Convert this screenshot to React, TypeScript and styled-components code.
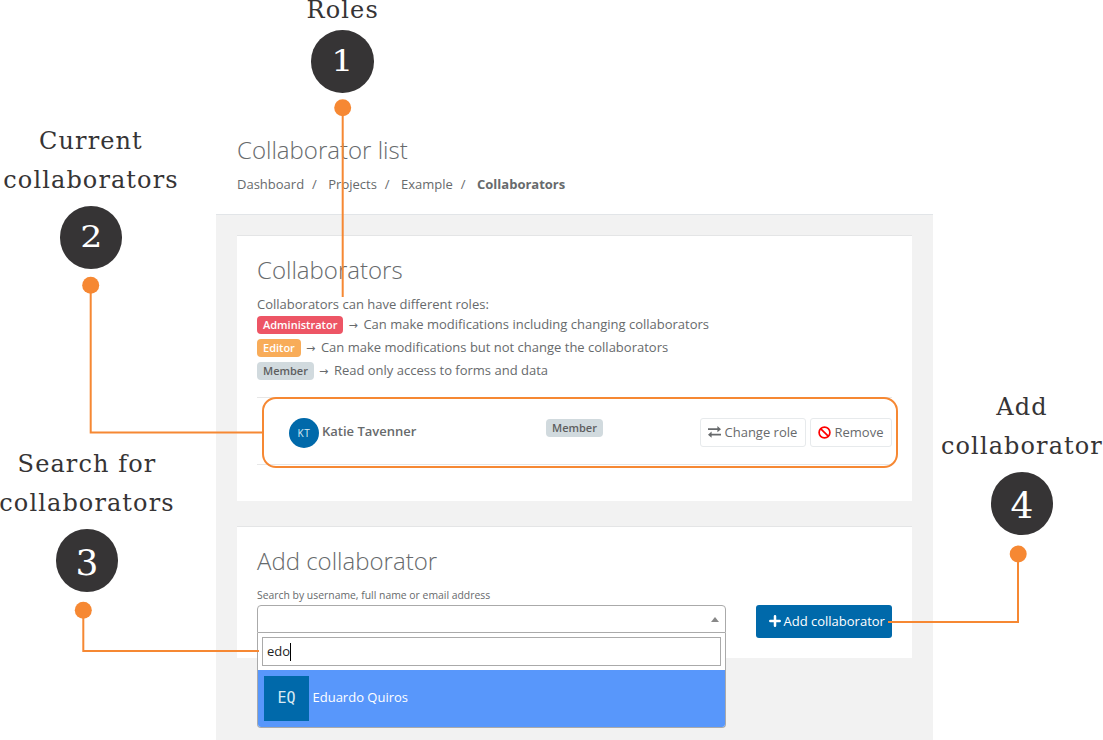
import React from "react";
import styled, { createGlobalStyle } from "styled-components";

const GlobalStyle = createGlobalStyle`
  *, *::before, *::after { box-sizing: border-box; }
  html, body { margin: 0; padding: 0; background: #fff; overflow: hidden; }
  body { font-family: "Open Sans", sans-serif; font-size: 13px; line-height: 18.57px; color: #676a6c; }
`;

const Figure = styled.div`
  position: relative;
  width: 1103px;
  height: 740px;
  overflow: hidden;
`;

const Page = styled.main`
  display: flex;
  flex-direction: column;
  width: 717px;
  height: 740px;
  margin-left: 216px;
  background: #f2f2f2;
`;

const PageHeader = styled.header`
  height: 215px;
  padding: 137px 21px 0;
  background: #fff;
  border-bottom: 1px solid #e2e5e8;
`;

const Title = styled.h2`
  margin: 0;
  font-size: 24px;
  font-weight: 300;
  line-height: 26px;
`;

const Breadcrumb = styled.ol`
  display: flex;
  margin: 12px 0 0;
  padding: 0;
  list-style: none;
`;

const Crumb = styled.li<{ $current?: boolean }>`
  font-weight: ${(p) => (p.$current ? 700 : 400)};
  &:not(:first-child)::before {
    content: "/";
    padding: 0 11.4px 0 8px;
    font-weight: 400;
  }
`;

const Content = styled.div`
  display: flex;
  flex-direction: column;
  gap: 25px;
  padding: 20px 21px 0;
`;

const Card = styled.section<{ $height: number }>`
  height: ${(p) => p.$height}px;
  padding: 21px 20px 0;
  background: #fff;
  border-top: 1px solid #e4e5e6;
`;

const RoleIntro = styled.p`
  margin: 12px 0 2px;
`;

const RoleLine = styled.div`
  display: flex;
  align-items: center;
  gap: 5px;
  height: 18px;
  margin-bottom: 5px;
`;

const Arrow = styled.span`
  font-family: "DejaVu Sans", sans-serif;
  font-size: 11px;
  width: 10px;
  display: flex;
  padding-top: 3px;
`;

const badgeColors = {
  danger: ["#ed5565", "#fff"],
  warning: ["#f8ac59", "#fff"],
  plain: ["#d1dade", "#5e5e5e"],
};

const Badge = styled.span<{ $tone: keyof typeof badgeColors }>`
  display: inline-block;
  height: 18px;
  padding: 0 6px;
  border-radius: 4px;
  font-size: 11px;
  font-weight: 600;
  line-height: 18px;
  background: ${(p) => badgeColors[p.$tone][0]};
  color: ${(p) => badgeColors[p.$tone][1]};
`;

const MemberRow = styled.div`
  display: grid;
  grid-template-columns: 257px 1fr auto;
  height: 68px;
  margin-top: 17px;
  padding: 20px 0 0 32px;
  border-top: 1px solid #e7e7e7;
  border-bottom: 1px solid #e7e7e7;
`;

const Person = styled.div`
  display: flex;
  gap: 3px;
  font-weight: 600;
  line-height: 27px;
`;

const Avatar = styled.span<{ $size: number; $round?: boolean }>`
  flex: none;
  display: flex;
  align-items: center;
  justify-content: center;
  width: ${(p) => p.$size}px;
  height: ${(p) => p.$size}px;
  border-radius: ${(p) => (p.$round ? "50%" : "0")};
  background: #0069aa;
  color: #d9e9f3;
  font-family: ${(p) => (p.$round ? '"Open Sans"' : '"DejaVu Sans Mono"')}, sans-serif;
  font-size: ${(p) => (p.$round ? 10 : 15)}px;
  font-weight: 400;
  line-height: 1;
  letter-spacing: ${(p) => (p.$round ? 0.6 : 0)}px;
  padding-top: ${(p) => (p.$round ? 1 : 0)}px;
`;

const Actions = styled.div`
  display: flex;
  gap: 4px;
`;

const GhostButton = styled.button<{ $width: number }>`
  display: flex;
  align-items: center;
  gap: 3.5px;
  width: ${(p) => p.$width}px;
  height: 29px;
  padding: 0 0 0 7px;
  border: 1px solid #e7eaec;
  border-radius: 3px;
  background: #fff;
  color: #676a6c;
  font: 13px "Open Sans", sans-serif;
  white-space: nowrap;
`;

const AddRow = styled.div`
  display: flex;
  justify-content: space-between;
`;

const FieldLabel = styled.label`
  display: block;
  margin-top: 12px;
  height: 19px;
  font-size: 10.4px;
  line-height: 19px;
`;

const Select = styled.div`
  position: relative;
  width: 469px;
  height: 28px;
`;

const SelectBox = styled.div`
  display: flex;
  align-items: center;
  justify-content: flex-end;
  height: 28px;
  padding-right: 6px;
  border: 1px solid #aaa;
  border-radius: 4px 4px 0 0;
  background: #fff;
`;

const Caret = styled.i`
  border: 4px solid transparent;
  border-top: 0;
  border-bottom: 5px solid #888;
`;

const Dropdown = styled.div`
  position: absolute;
  top: 28px;
  left: 0;
  width: 469px;
  height: 95px;
  padding-top: 4px;
  border: 1px solid #aaa;
  border-top: 0;
  border-radius: 0 0 4px 4px;
  background: #fff;
  overflow: hidden;
`;

const SearchInput = styled.div`
  display: flex;
  align-items: center;
  height: 29px;
  margin: 0 4px 4px;
  padding: 0 4px;
  border: 1px solid #aaa;
  color: #222;
`;

const TextCursor = styled.i`
  width: 1px;
  height: 18px;
  background: #000;
`;

const Option = styled.div`
  display: flex;
  gap: 3.5px;
  height: 57px;
  padding: 6px;
  background: #5897fb;
  color: #fff;
  line-height: 43px;
`;

const PrimaryButton = styled.button`
  display: flex;
  align-items: center;
  gap: 3px;
  width: 136px;
  height: 33px;
  padding: 0 0 1px 12.5px;
  border: 0;
  border-radius: 3px;
  background: #0069aa;
  color: #fff;
  font: 13px "Open Sans", sans-serif;
  white-space: nowrap;
`;

const Overlay = styled.svg`
  position: absolute;
  inset: 0;
  pointer-events: none;
`;

const Callout = styled.div<{ $x: number; $y: number }>`
  position: absolute;
  left: ${(p) => p.$x - 100}px;
  top: ${(p) => p.$y}px;
  width: 200px;
  display: flex;
  flex-direction: column;
  align-items: center;
`;

const CalloutText = styled.div`
  font: 24px/39px "DejaVu Serif", serif;
  letter-spacing: 1.1px;
  color: #363435;
  text-align: center;
  white-space: pre;
`;

const CalloutNumber = styled.div<{ $gap: number }>`
  display: flex;
  align-items: center;
  justify-content: center;
  width: 62.5px;
  height: 62.5px;
  margin-top: ${(p) => p.$gap}px;
  border-radius: 50%;
  background: #363435;
  color: #fff;
`;

/* Old-style numerals: 1 and 2 sit at x-height and run wide, 3 and 4 descend. */
const Numeral = styled.span<{ $descends: boolean }>`
  font: ${(p) => (p.$descends ? 36 : 29)}px/1 "DejaVu Serif", serif;
  padding-top: ${(p) => (p.$descends ? 5 : 1)}px;
  transform: scaleX(${(p) => (p.$descends ? 1 : 1.2)});
`;

const ExchangeIcon = () => (
  <svg width="13" height="12" viewBox="0 0 13 12" fill="currentColor">
    <path d="M0 2.2h9.4V.1L13 3.2 9.4 6.3V4.1H0zM13 7.7H3.6V5.6L0 8.7l3.6 3.1V9.6H13z" />
  </svg>
);

const BanIcon = () => (
  <svg width="13" height="13" viewBox="0 0 13 13" fill="none" stroke="#f00" strokeWidth="1.7">
    <circle cx="6.5" cy="6.5" r="5.4" />
    <path d="M2.8 2.8l7.4 7.4" />
  </svg>
);

const PlusIcon = () => (
  <svg width="12" height="12" viewBox="0 0 12 12" stroke="#fff" strokeWidth="2.5" strokeLinecap="round">
    <path d="M6 1.3v9.4M1.3 6h9.4" />
  </svg>
);

const roles = [
  { name: "Administrator", tone: "danger", text: "Can make modifications including changing collaborators" },
  { name: "Editor", tone: "warning", text: "Can make modifications but not change the collaborators" },
  { name: "Member", tone: "plain", text: "Read only access to forms and data" },
] as const;

const callouts = [
  { n: "1", x: 342.7, y: -9, text: "Roles", gap: 0 },
  { n: "2", x: 91, y: 122, text: "Current\ncollaborators", gap: 6 },
  { n: "3", x: 87, y: 445, text: "Search for\ncollaborators", gap: 6 },
  { n: "4", x: 1022, y: 388, text: "Add\ncollaborator", gap: 6 },
];

export default function App() {
  return (
    <Figure>
      <GlobalStyle />
      <Page>
        <PageHeader>
          <Title>Collaborator list</Title>
          <Breadcrumb>
            <Crumb>Dashboard</Crumb>
            <Crumb>Projects</Crumb>
            <Crumb>Example</Crumb>
            <Crumb $current>Collaborators</Crumb>
          </Breadcrumb>
        </PageHeader>
        <Content>
          <Card $height={266}>
            <Title>Collaborators</Title>
            <RoleIntro>Collaborators can have different roles:</RoleIntro>
            {roles.map((r) => (
              <RoleLine key={r.name}>
                <Badge $tone={r.tone}>{r.name}</Badge>
                <Arrow>→</Arrow>
                <span>{r.text}</span>
              </RoleLine>
            ))}
            <MemberRow>
              <Person>
                <Avatar $size={30} $round>KT</Avatar>
                Katie Tavenner
              </Person>
              <div>
                <Badge $tone="plain">Member</Badge>
              </div>
              <Actions>
                <GhostButton $width={106}><ExchangeIcon />Change role</GhostButton>
                <GhostButton $width={82}><BanIcon />Remove</GhostButton>
              </Actions>
            </MemberRow>
          </Card>
          <Card $height={132}>
            <Title>Add collaborator</Title>
            <FieldLabel>Search by username, full name or email address</FieldLabel>
            <AddRow>
              <Select>
                <SelectBox><Caret /></SelectBox>
                <Dropdown>
                  <SearchInput>edo<TextCursor /></SearchInput>
                  <Option>
                    <Avatar $size={45}>EQ</Avatar>
                    Eduardo Quiros
                  </Option>
                </Dropdown>
              </Select>
              <PrimaryButton><PlusIcon />Add collaborator</PrimaryButton>
            </AddRow>
          </Card>
        </Content>
      </Page>
      <Overlay width="1103" height="740" fill="none" stroke="#f68833" strokeWidth="2">
        <rect x="263" y="398" width="634" height="69" rx="13" />
        <path d="M342.7 107v190M90.7 285v147.5H263M83.3 610v41H259M1018 554v68H888" />
        <g fill="#f68833" stroke="none">
          <circle cx="342.7" cy="107.8" r="8.5" />
          <circle cx="90.7" cy="285.3" r="8.5" />
          <circle cx="83.3" cy="610.3" r="8.5" />
          <circle cx="1018.2" cy="554" r="8.5" />
        </g>
      </Overlay>
      {callouts.map((c) => (
        <Callout key={c.n} $x={c.x} $y={c.y}>
          <CalloutText>{c.text}</CalloutText>
          <CalloutNumber $gap={c.gap}>
            <Numeral $descends={c.n > "2"}>{c.n}</Numeral>
          </CalloutNumber>
        </Callout>
      ))}
    </Figure>
  );
}
